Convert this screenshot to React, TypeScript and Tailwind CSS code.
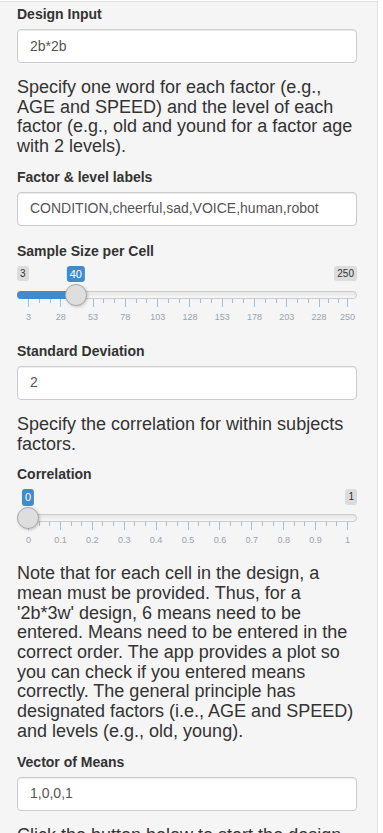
import React from 'react';

interface Tick {
  p: number;
  label: string;
  small?: boolean;
}

// ion.rangeSlider style grid: big ticks every bigW %, two small ticks in between
function makeTicks(bigW: number, labels: string[]): Tick[] {
  const out: Tick[] = [];
  labels.forEach((label, i) => {
    const bigP = Math.min(bigW * i, 100);
    out.push({ p: bigP, label });
    if (i > 0) {
      const smallW = (bigP - bigW * (i - 1)) / 3;
      for (let z = 1; z <= 2; z++) out.push({ p: bigP - smallW * z, label: '', small: true });
    }
  });
  return out;
}

function Label({ children }: { children: React.ReactNode }) {
  return <label className="block text-[14px] font-bold leading-[20px] mb-[5px] text-[#333]">{children}</label>;
}

function TextInput({ value }: { value: string }) {
  return (
    <div className="mb-[15px] h-[34px] w-full flex items-center border border-[#ccc] rounded-[4px] bg-white px-3 text-[14px] text-[#555] shadow-[inset_0_1px_1px_rgba(0,0,0,0.075)]">
      {value}
    </div>
  );
}

function Para({ children }: { children: React.ReactNode }) {
  return <p className="text-[18px] leading-[19.7px] text-[#333] mb-[10px]">{children}</p>;
}

interface SliderProps {
  minLabel: string;
  maxLabel: string;
  valueLabel: string;
  pct: number;
  ticks: Tick[];
}

function Slider({ minLabel, maxLabel, valueLabel, pct, ticks }: SliderProps) {
  // grid runs from 11px to 330px of the 340px track (handle radius inset)
  const x = 11 + (pct / 100) * 319;
  const hideMin = x < 40;
  return (
    <div className="relative flex flex-col mb-[15px]">
      <div className="flex justify-between items-start h-[25px]">
        <span
          className={`px-[3px] py-px rounded-[3px] bg-black/10 text-[10px] leading-[1.333] text-[#333] ${
            hideMin ? 'invisible' : ''
          }`}
        >
          {minLabel}
        </span>
        <span className="px-[3px] py-px rounded-[3px] bg-black/10 text-[10px] leading-[1.333] text-[#333]">
          {maxLabel}
        </span>
      </div>
      <div className="relative h-[8px] rounded-full border border-[#ccc] bg-[linear-gradient(to_bottom,#ddd_-50%,#fff_150%)]">
        {pct > 0 && (
          <div className="absolute -top-px -left-px h-[8px] rounded-l-full bg-[#428bca]" style={{ width: x }} />
        )}
      </div>
      <div className="relative ml-[11px] w-[319px] h-[27px]">
        {ticks.map((t, i) =>
          t.small ? (
            <span key={i} className="absolute top-0 w-px h-[4px] bg-[#428bca]/50" style={{ left: `${t.p}%` }} />
          ) : (
            <React.Fragment key={i}>
              <span className="absolute top-0 w-px h-[8px] bg-[#428bca]/50" style={{ left: `${t.p}%` }} />
              <span
                className="absolute top-[12px] -translate-x-1/2 text-[9px] leading-[12px] text-[#99a4ac] whitespace-nowrap"
                style={{ left: `calc(${t.p}% + 0.5px)` }}
              >
                {t.label}
              </span>
            </React.Fragment>
          )
        )}
      </div>
      {/* value bubble and handle sit over the track */}
      <span
        className="absolute top-0 -translate-x-1/2 px-[3px] py-px rounded-[3px] bg-[#428bca] text-[11px] leading-[1.333] text-white"
        style={{ left: x }}
      >
        {valueLabel}
      </span>
      <div
        className="absolute top-[18px] w-[22px] h-[22px] -translate-x-1/2 rounded-full border border-[#aaa] bg-[#dedede] shadow-[1px_1px_3px_rgba(0,0,0,0.2)]"
        style={{ left: x }}
      />
    </div>
  );
}

const sizeTicks = makeTicks(100 / 9.88, ['3', '28', '53', '78', '103', '128', '153', '178', '203', '228', '250']);
const corrTicks = makeTicks(10, ['0', '0.1', '0.2', '0.3', '0.4', '0.5', '0.6', '0.7', '0.8', '0.9', '1']);

export default function App() {
  return (
    <div className="w-[383px] h-[833px] overflow-hidden bg-white pt-px font-['Liberation_Sans',Arial,sans-serif]">
      <div className="flex flex-col w-[378px] bg-[#f5f5f5] border-t border-r border-[#e3e3e3] pl-[17px] pr-[20px] pt-[2px] pb-10">
        <Label>Design Input</Label>
        <TextInput value="2b*2b" />
        <Para>
          Specify one word for each factor (e.g., AGE and SPEED) and the level of each factor (e.g., old and yound for a
          factor age with 2 levels).
        </Para>

        <Label>Factor &amp; level labels</Label>
        <TextInput value="CONDITION,cheerful,sad,VOICE,human,robot" />

        <Label>Sample Size per Cell</Label>
        <Slider minLabel="3" maxLabel="250" valueLabel="40" pct={(37 / 247) * 100} ticks={sizeTicks} />

        <Label>Standard Deviation</Label>
        <TextInput value="2" />
        <Para>Specify the correlation for within subjects factors.</Para>

        <Label>Correlation</Label>
        <Slider minLabel="0" maxLabel="1" valueLabel="0" pct={0} ticks={corrTicks} />

        <Para>
          Note that for each cell in the design, a mean must be provided. Thus, for a '2b*3w' design, 6 means need to be
          entered. Means need to be entered in the correct order. The app provides a plot so you can check if you
          entered means correctly. The general principle has designated factors (i.e., AGE and SPEED) and levels (e.g.,
          old, young).
        </Para>

        <Label>Vector of Means</Label>
        <TextInput value="1,0,0,1" />
        <Para>Click the button below to start the design and run the simulation.</Para>
      </div>
    </div>
  );
}
